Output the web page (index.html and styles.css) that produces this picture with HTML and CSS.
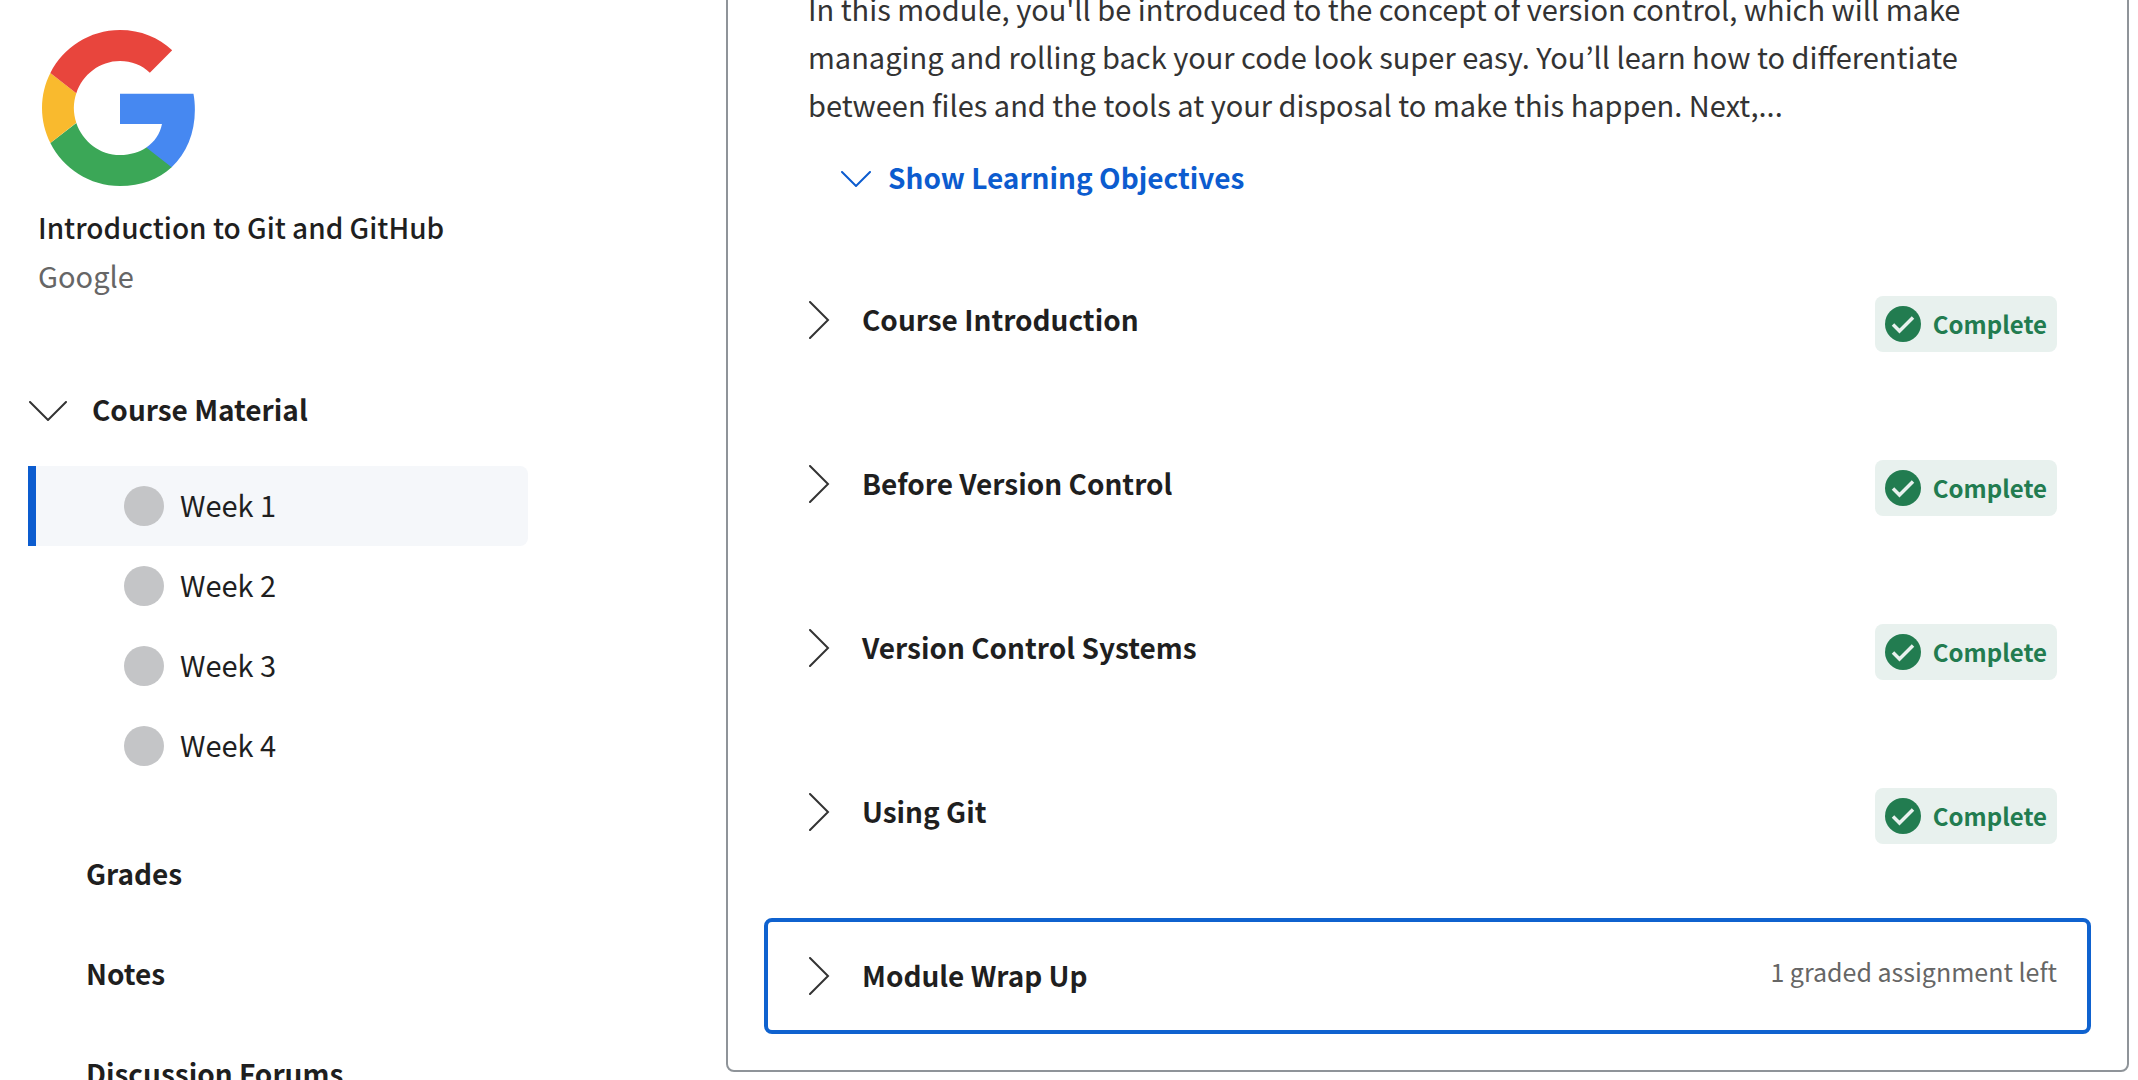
FILE: index.html
```html
<!DOCTYPE html>
<html lang="en">
<head>
<meta charset="utf-8">
<meta name="viewport" content="width=device-width, initial-scale=1">
<title>Introduction to Git and GitHub</title>
<link rel="stylesheet" href="styles.css">
</head>
<body>
<svg class="sprite" aria-hidden="true">
  <symbol id="chevron-right" viewBox="0 0 21 38"><path d="M1 1 L19 19 L1 37" fill="none" stroke="#333" stroke-width="2" stroke-linecap="round"/></symbol>
  <symbol id="check" viewBox="0 0 36 36"><circle cx="18" cy="18" r="18" fill="#227c50"/><path d="M8 18.500 L14.500 25 L28 11.500" fill="none" stroke="#e8f1ee" stroke-width="3.500"/></symbol>
</svg>
<div class="page">
  <aside class="sidebar">
    <header class="course">
      <svg class="logo" viewBox="1 1 22 22" role="img" aria-label="Google logo">
        <path fill="#4688f1" d="M22.560 12.250c0-.78-.07-1.530-.2-2.250H12v4.260h5.920c-.26 1.370-1.040 2.530-2.210 3.310v2.770h3.570c2.080-1.920 3.280-4.740 3.280-8.090z"/>
        <path fill="#3ba757" d="M12 23c2.970 0 5.460-.98 7.280-2.660l-3.570-2.770c-.98.66-2.230 1.060-3.710 1.060-2.860 0-5.290-1.930-6.160-4.530L2.180 16.940C3.990 20.530 7.700 23 12 23z"/>
        <path fill="#f9ba2e" d="M5.840 14.090c-.22-.66-.35-1.360-.35-2.090s.13-1.430.35-2.090L2.180 7.070C1.430 8.550 1 10.220 1 12s.43 3.450 1.180 4.930z"/>
        <path fill="#e8453d" d="M12 5.380c1.620 0 3.060.56 4.210 1.640l3.150-3.150C17.450 2.090 14.970 1 12 1 7.700 1 3.990 3.470 2.180 7.070l3.660 2.840c.87-2.600 3.300-4.530 6.160-4.530z"/>
      </svg>
      <h1 class="course-title">Introduction to Git and GitHub</h1>
      <p class="provider">Google</p>
    </header>
    <nav aria-label="Course">
      <button class="material" type="button" aria-expanded="true">
        <svg class="material-icon" viewBox="0 0 38 20" aria-hidden="true"><path d="M1 1 L19 19 L37 1" fill="none" stroke="#333" stroke-width="2" stroke-linecap="round"/></svg>
        Course Material
      </button>
      <ul class="weeks">
        <li><a class="week current" href="#week-1" aria-current="page"><span class="dot"></span><span class="week-label">Week 1</span></a></li>
        <li><a class="week" href="#week-2"><span class="dot"></span><span class="week-label">Week 2</span></a></li>
        <li><a class="week" href="#week-3"><span class="dot"></span><span class="week-label">Week 3</span></a></li>
        <li><a class="week" href="#week-4"><span class="dot"></span><span class="week-label">Week 4</span></a></li>
      </ul>
      <ul class="links">
        <li><a class="link" href="#grades">Grades</a></li>
        <li><a class="link" href="#notes">Notes</a></li>
        <li><a class="link" href="#forums">Discussion Forums</a></li>
      </ul>
    </nav>
  </aside>
  <main class="module">
    <p class="summary">In this module, you'll be introduced to the concept of version control, which will make managing and rolling back your code look super easy. You’ll learn how to differentiate between files and the tools at your disposal to make this happen. Next,...</p>
    <button class="objectives" type="button" aria-expanded="false">
      <svg class="objectives-icon" viewBox="0 0 30 16" aria-hidden="true"><path d="M1 1 L15 15 L29 1" fill="none" stroke="currentColor" stroke-width="2" stroke-linecap="round"/></svg>
      Show Learning Objectives
    </button>
    <div class="lessons">
      <button class="lesson" type="button"><svg class="lesson-icon" aria-hidden="true"><use href="#chevron-right"/></svg><span class="lesson-title">Course Introduction</span><span class="badge"><svg class="check" aria-hidden="true"><use href="#check"/></svg>Complete</span></button>
      <button class="lesson" type="button"><svg class="lesson-icon" aria-hidden="true"><use href="#chevron-right"/></svg><span class="lesson-title">Before Version Control</span><span class="badge"><svg class="check" aria-hidden="true"><use href="#check"/></svg>Complete</span></button>
      <button class="lesson" type="button"><svg class="lesson-icon" aria-hidden="true"><use href="#chevron-right"/></svg><span class="lesson-title">Version Control Systems</span><span class="badge"><svg class="check" aria-hidden="true"><use href="#check"/></svg>Complete</span></button>
      <button class="lesson" type="button"><svg class="lesson-icon" aria-hidden="true"><use href="#chevron-right"/></svg><span class="lesson-title">Using Git</span><span class="badge"><svg class="check" aria-hidden="true"><use href="#check"/></svg>Complete</span></button>
      <button class="lesson focused" type="button"><svg class="lesson-icon" aria-hidden="true"><use href="#chevron-right"/></svg><span class="lesson-title">Module Wrap Up</span><span class="remaining">1 graded assignment left</span></button>
    </div>
  </main>
</div>
</body>
</html>
```

FILE: styles.css
```css
* {
  box-sizing: border-box;
}

body {
  margin: 0;
  background: #fff;
  color: #1f1f1f;
  font-family: "Noto Sans CJK KR", "Noto Sans", sans-serif;
  font-size: 29px;
  line-height: 48px;
}

h1, p, ul {
  margin: 0;
  padding: 0;
}

ul {
  list-style: none;
}

a {
  color: inherit;
  text-decoration: none;
}

button {
  border: 0;
  padding: 0;
  background: none;
  color: inherit;
  font: inherit;
  font-size: 28px;
  font-weight: 700;
  text-align: left;
}

svg {
  display: block;
  flex: none;
}

.sprite {
  position: absolute;
  width: 0;
  height: 0;
}

.page {
  display: grid;
  grid-template-columns: minmax(0, 726px) 1fr;
  align-items: start;
  height: 100vh;
  overflow: hidden;
}

/* Sidebar */

.sidebar {
  width: 528px;
  max-width: 100%;
  padding: 30px 0 0 28px;
}

.course {
  padding-left: 10px;
}

.logo {
  width: 156px;
  height: 156px;
  margin: 0 0 17px 4px;
}

.course-title {
  font-size: 28px;
  font-weight: 500;
}

.provider {
  color: #666;
}

.material {
  display: flex;
  align-items: center;
  gap: 25px;
  margin-top: 86px;
}

.material-icon {
  width: 38px;
  height: 20px;
  margin: 4px 0 0 1px;
}

.weeks {
  margin: 33px 0 37px;
}

.week {
  display: flex;
  align-items: center;
  gap: 16px;
  height: 80px;
  padding-left: 88px;
  border-left: 8px solid transparent;
}

.week.current {
  border-left-color: #0c5ccf;
  border-radius: 0 8px 8px 0;
  background: #f5f7fa;
}

.week-label {
  padding-bottom: 4px;
}

.dot {
  width: 40px;
  height: 40px;
  border-radius: 50%;
  background: #c4c5c7;
}

.link {
  display: block;
  padding: 26px 0 26px 58px;
  font-size: 28px;
  font-weight: 700;
}

/* Module card */

.module {
  margin: -18px 9px 0 0;
  padding: 0 36px 36px;
  border: 2px solid #8f9499;
  border-radius: 8px;
}

.summary {
  max-width: 1240px;
  padding-left: 44px;
  color: #333;
}

.objectives {
  display: flex;
  align-items: center;
  gap: 17px;
  margin: 25px 0 61px 77px;
  color: #0c5ccf;
}

.objectives-icon {
  width: 30px;
  height: 16px;
  margin-top: 4px;
}

.lessons {
  display: grid;
  gap: 48px;
}

.lesson {
  display: flex;
  align-items: flex-start;
  height: 116px;
  padding: 29px 30px 0 41px;
  border: 4px solid transparent;
  border-radius: 8px;
}

.lesson.focused {
  border-color: #0f62cf;
}

.lesson-icon {
  width: 21px;
  height: 38px;
  margin: 6px 32px 0 0;
}

.lesson-title {
  flex: 1;
}

.badge {
  display: flex;
  align-items: center;
  gap: 12px;
  height: 56px;
  margin-top: 1px;
  padding: 0 10px;
  border-radius: 8px;
  background: #e8f1ee;
  color: #227c50;
  font-size: 24px;
}

.check {
  width: 36px;
  height: 36px;
}

.remaining {
  color: #666;
  font-size: 25px;
  font-weight: 400;
  line-height: 40px;
}
```
